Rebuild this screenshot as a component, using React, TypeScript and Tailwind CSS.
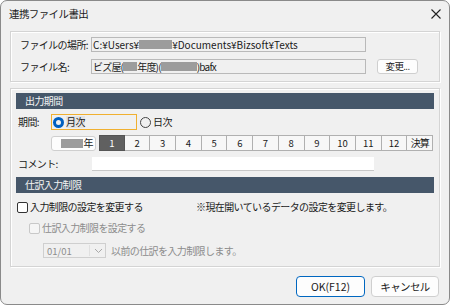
import { useState } from "react";

const font = { fontFamily: '"Noto Sans CJK JP", "Noto Sans", sans-serif' };

function Blur({ w }: { w: number }) {
    return (
        <span
            className="inline-block h-[9px] bg-[#9c9c9c] blur-[0.6px] align-middle"
            style={{ width: w }}
        />
    );
}

function Header({ children }: { children: React.ReactNode }) {
    return (
        <div className="h-[16px] bg-[#46576a] text-[#f4f4f4] text-[10px] leading-[16px] pl-[9px]">
            {children}
        </div>
    );
}

export default function App() {
    const [month, setMonth] = useState(1);
    const [mode, setMode] = useState("month");
    const months = [1, 2, 3, 4, 5, 6, 7, 8, 9, 10, 11, 12];

    return (
        <div
            className="w-[450px] h-[305px] bg-[#f0f0f0] border border-[#8a8a8a] rounded-[7px] flex flex-col text-[#1a1a1a] overflow-hidden whitespace-nowrap tracking-[-0.6px]"
            style={font}
        >
            <div className="h-[26px] flex items-center justify-between pl-[8px] pr-[6px] shrink-0">
                <span className="text-[10.5px]">連携ファイル書出</span>
                <svg width="12" height="12" viewBox="0 0 12 12" className="mr-[1px]">
                    <path d="M1.5 1.5 L10.5 10.5 M10.5 1.5 L1.5 10.5" stroke="#222" strokeWidth="1.1" />
                </svg>
            </div>

            <div className="px-[9px] flex flex-col">
                {/* file group */}
                <div className="mt-[4px] h-[51px] border border-[#d4d4d4] shadow-[inset_1px_1px_0_#fff,1px_1px_0_#fff] pl-[9px] pt-[5px] flex flex-col gap-[7px] text-[10px] leading-[15px]">
                    <div className="flex items-center h-[15px]">
                        <span className="w-[71px]">ファイルの場所:</span>
                        <div className="w-[275px] h-[15px] border border-[#b9b9b9] bg-[#f0f0f0] leading-[13px] pl-[1px] tracking-normal flex items-center">
                            C:¥Users¥<Blur w={33} />¥Documents¥Bizsoft¥Texts
                        </div>
                    </div>
                    <div className="flex items-center h-[15px]">
                        <span className="w-[71px]">ファイル名:</span>
                        <div className="w-[275px] h-[15px] border border-[#b9b9b9] bg-[#f0f0f0] leading-[13px] pl-[1px] tracking-[-0.8px] flex items-center">
                            ビズ屋(<Blur w={14} />年度)(<Blur w={36} />)bafx
                        </div>
                        <button className="ml-[11px] w-[41px] h-[15px] bg-[#fdfdfd] border border-[#cfcfcf] rounded-[3px] text-[9.5px] leading-[13px]">
                            変更...
                        </button>
                    </div>
                </div>

                {/* period group */}
                <div className="mt-[6px] h-[179px] border border-[#d4d4d4] shadow-[inset_1px_1px_0_#fff,1px_1px_0_#fff] px-[5px] pt-[4px] flex flex-col text-[10px] leading-[14px]">
                    <Header>出力期間</Header>
                    <div className="flex items-center mt-[5px] h-[16px]">
                        <span className="w-[35px] pl-[2px]">期間:</span>
                        <button
                            onClick={() => setMode("month")}
                            className="w-[86px] h-[16px] border border-[#f0b030] flex items-center pl-[1px]"
                        >
                            <span className={"w-[11px] h-[11px] rounded-full " + (mode === "month" ? "border-[3px] border-[#0060c0]" : "border border-[#444]")} />
                            <span className="ml-[2px] bg-[#e4e4e4] leading-[12px]">月次</span>
                        </button>
                        <button onClick={() => setMode("day")} className="ml-[3px] flex items-center">
                            <span className={"w-[11px] h-[11px] rounded-full " + (mode === "day" ? "border-[3px] border-[#0060c0]" : "border border-[#444]")} />
                            <span className="ml-[2px]">日次</span>
                        </button>
                    </div>

                    <div className="flex items-center mt-[5px] ml-[35px] h-[16px]">
                        <div className="w-[45px] h-[15px] bg-[#fdfdfd] border border-[#cfcfcf] rounded-[3px] flex items-center justify-end pr-[2px] gap-[1px]">
                            <Blur w={22} />
                            <span>年</span>
                        </div>
                        <div className="ml-[3px] flex">
                            {months.map((m) => (
                                <button
                                    key={m}
                                    onClick={() => setMonth(m)}
                                    className={
                                        "w-[25.7px] h-[16px] border text-[9.5px] leading-[14px] tracking-normal " +
                                        (month === m
                                            ? "bg-[#606060] text-white border-[#555]"
                                            : "bg-[#f7f7f7] border-[#b0b0b0] border-l-0")
                                    }
                                >
                                    {m}
                                </button>
                            ))}
                            <button className="w-[26px] h-[16px] border border-l-0 border-[#b0b0b0] bg-[#f7f7f7] text-[10px] leading-[14px] tracking-[-1px]">
                                決算
                            </button>
                        </div>
                    </div>

                    <div className="flex items-center mt-[5px] h-[15px]">
                        <span className="w-[76px] pl-[2px]">コメント:</span>
                        <div className="w-[282px] h-[14px] bg-white border-b border-[#c8c8c8]" />
                    </div>

                    <div className="mt-[6px]">
                        <Header>仕訳入力制限</Header>
                    </div>

                    <div className="flex items-center mt-[7px] h-[14px]">
                        <span className="w-[11px] h-[11px] border border-[#333] rounded-[2px] bg-white ml-[1px]" />
                        <span className="ml-[2px] w-[166px]">入力制限の設定を変更する</span>
                        <span>※現在開いているデータの設定を変更します。</span>
                    </div>

                    <div className="flex items-center mt-[7px] h-[14px] ml-[13px] text-[#8c8c8c]">
                        <span className="w-[11px] h-[11px] border border-[#c8c8c8] rounded-[2px] bg-[#f5f5f5]" />
                        <span className="ml-[2px]">仕訳入力制限を設定する</span>
                    </div>

                    <div className="flex items-center mt-[8px] h-[15px] ml-[27px] text-[#8c8c8c]">
                        <div className="w-[63px] h-[15px] border border-[#cfcfcf] bg-[#f0f0f0] flex items-center pl-[3px] text-[9.5px] tracking-normal">
                            <span className="w-[42px]">01/01</span>
                            <span className="w-[1px] h-[11px] bg-[#e0e0e0]" />
                            <svg width="9" height="6" viewBox="0 0 9 6" className="ml-[4px]">
                                <path d="M1 1 L4.5 4.5 L8 1" fill="none" stroke="#a8a8a8" strokeWidth="1" />
                            </svg>
                        </div>
                        <span className="ml-[5px]">以前の仕訳を入力制限します。</span>
                    </div>
                </div>

                <div className="flex justify-end gap-[6px] mt-[9px] mr-[1px]">
                    <button className="w-[69px] h-[21px] bg-[#fdfdfd] border border-[#0067c0] rounded-[4px] text-[10.5px] tracking-normal">
                        OK(F12)
                    </button>
                    <button className="w-[68px] h-[21px] bg-[#fdfdfd] border border-[#cfcfcf] rounded-[4px] text-[10.5px]">
                        キャンセル
                    </button>
                </div>
            </div>
        </div>
    );
}
